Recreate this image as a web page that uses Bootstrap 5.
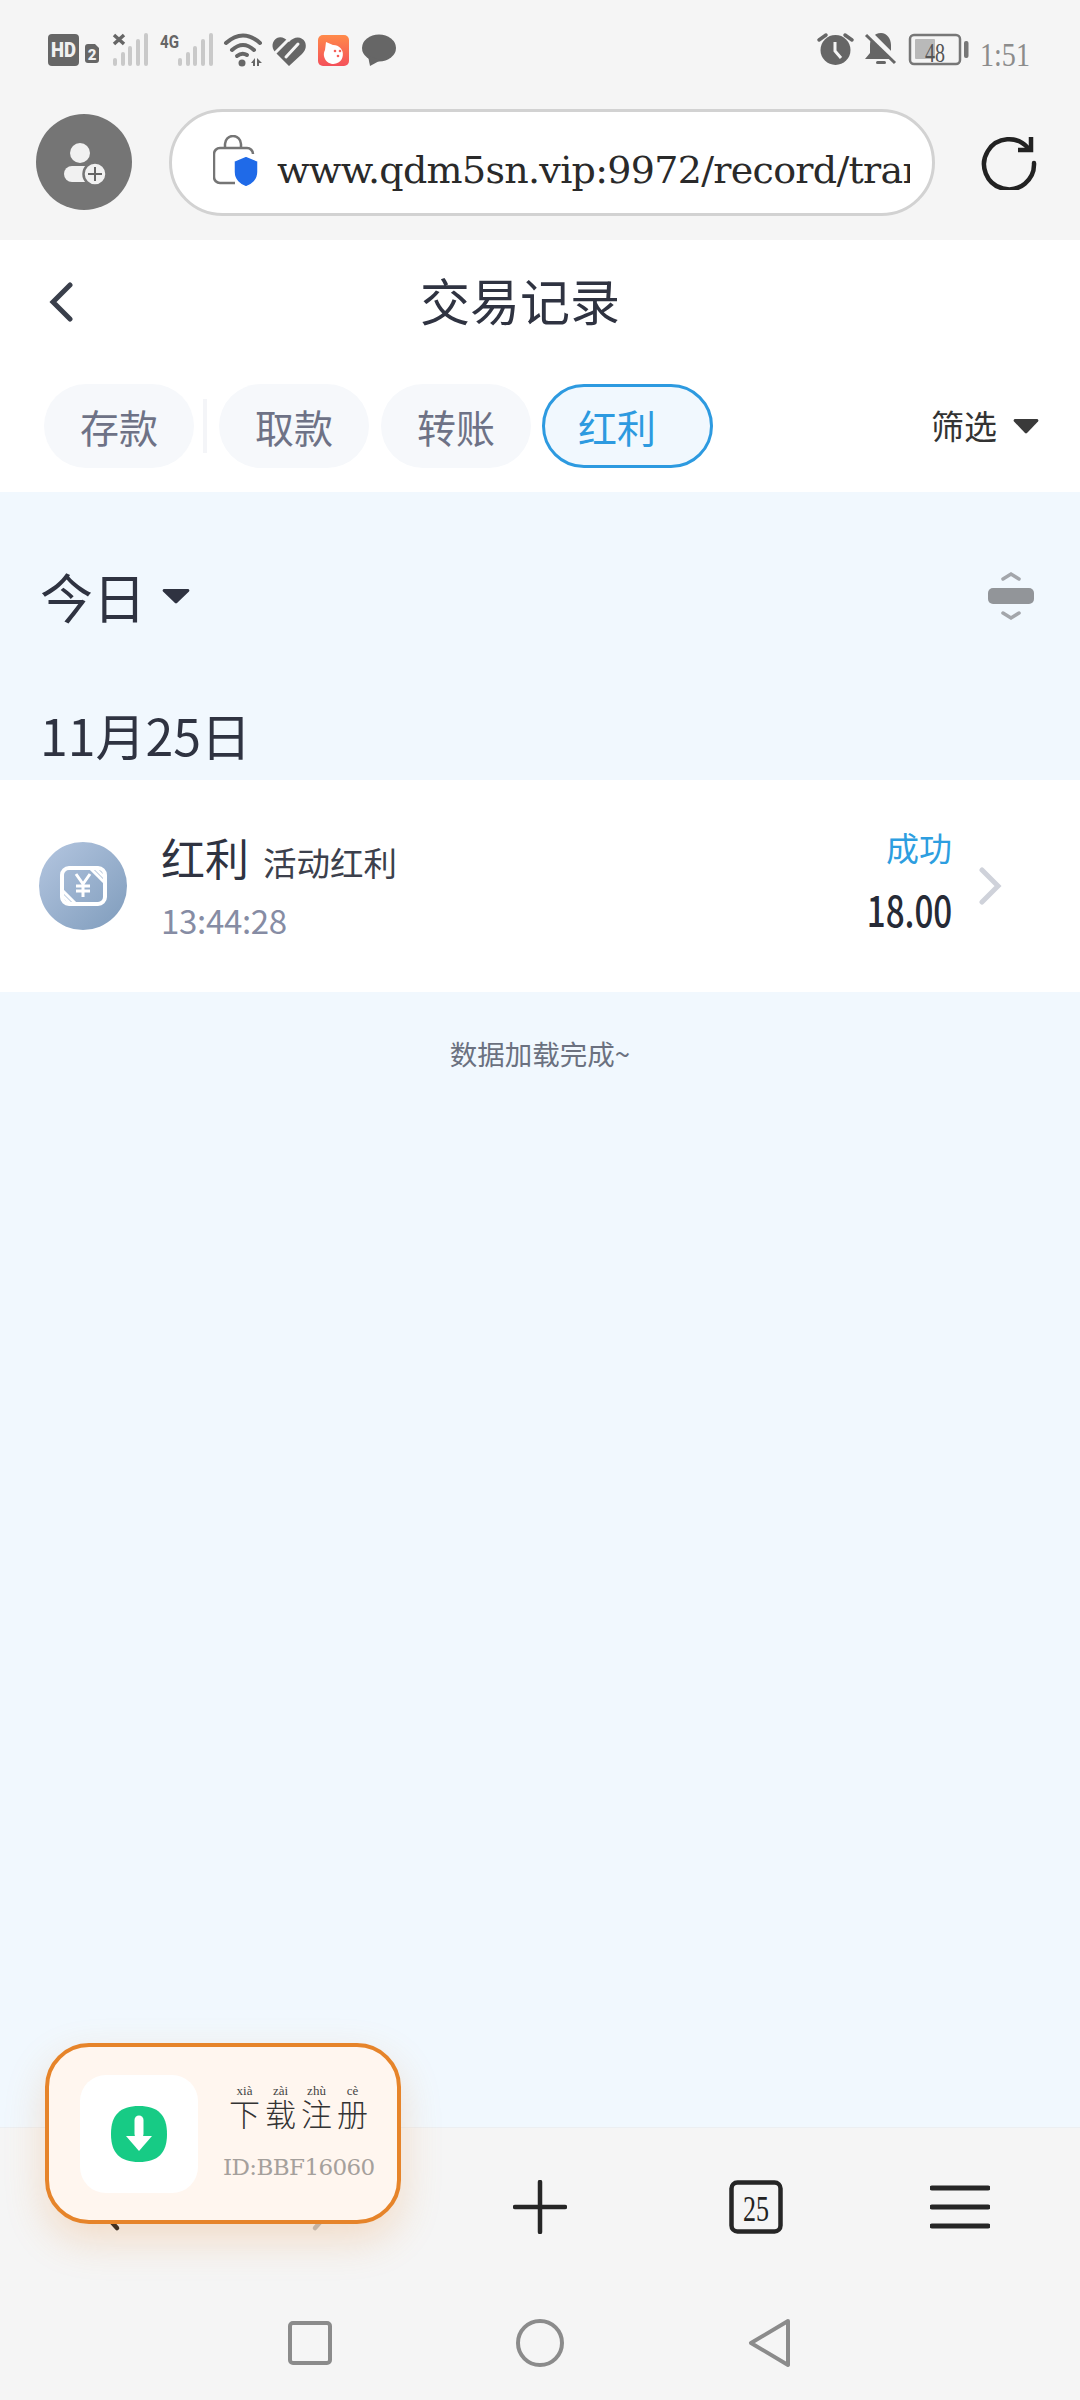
<!DOCTYPE html>
<html lang="zh-CN">
<head>
  <meta charset="UTF-8" />
  <meta name="viewport" content="width=device-width, initial-scale=1.0"/>
  <title>交易记录</title>
  <link href="https://cdn.jsdelivr.net/npm/bootstrap@5.3.0/dist/css/bootstrap.min.css" rel="stylesheet" />
  <style>
    body { width: 1080px; height: 2400px; overflow: hidden; background: #f1f8fe; font-family: "Noto Sans CJK SC", "Noto Sans", sans-serif; color: #2f3341; }
    svg { display: block; flex-shrink: 0; }
    .chrome-top { background: #f5f5f5; height: 240px; }
    .status-row { height: 92px; padding: 30px 40px 0 48px; }
    .browser-row { height: 140px; padding: 0 45px 0 36px; }
    .url-box { width: 766px; height: 107px; margin: 0 46px 0 37px; border: 3px solid #d2d2d2; background: #fff; padding: 0 22px 0 41px; }
    .url-text { font-family: "DejaVu Serif", "Liberation Serif", serif; font-size: 38px; color: #2a2a2a; white-space: nowrap; overflow: hidden; margin-left: 18px; padding-top: 16px; letter-spacing: -.7px; }
    .head-panel { background: #fff; height: 252px; padding-bottom: 24px; }
    .title-row { height: 124px; padding-bottom: 6px; }
    .back-cell { width: 100px; padding-left: 48px; padding-top: 6px; }
    .title-spacer { width: 140px; }
    .page-title { font-size: 50px; line-height: 1; color: #2f3341; }
    .tab-row { padding: 0 41px 0 44px; height: 84px; margin-top: 20px; }
    .tab-pill { width: 150px; height: 84px; padding: 0 36px; font-size: 39px; line-height: 78px; border: 0; background: #f6f8fb; color: #6e7286; text-align: left; white-space: nowrap; }
    .tab-on { width: 171px; border: 3px solid #2d9ae0; background: #f1f8fe; color: #2d9ae0; padding: 0 33px; margin-left: 11px; }
    .tab-gap { width: 4px; height: 54px; background: #f4f5f8; margin: 0 12px 0 9px; }
    .tab-next { margin-left: 12px; }
    .filter-text { font-size: 33px; color: #333; }
    .day-row { height: 208px; padding: 0 46px 0 40px; }
    .day-text { font-size: 53px; color: #2f3341; line-height: 1; }
    .date-row { height: 80px; padding-left: 40px; font-size: 50px; line-height: 68px; color: #2f3341; }
    .record-item { height: 212px; padding: 0 104px 0 39px; border-width: 0 0 2px; border-color: #eceef1; border-radius: 0; }
    .record-main { margin-left: 34px; }
    .rec-top { margin-top: -3px; }
    .rec-name { font-size: 44px; line-height: 60px; color: #2f3341; }
    .rec-sub { font-size: 33.500px; color: #3c404c; margin-left: 14px; margin-top: 10px; }
    .rec-time { font-size: 33px; line-height: 44px; color: #868ca4; letter-spacing: -.3px; margin-top: 11px; }
    .rec-state { font-size: 33px; line-height: 48px; color: #2d9ee0; margin-top: -13px; }
    .rec-amount { font-size: 42px; line-height: 56px; font-weight: 500; color: #262a36; transform: scaleX(.79); transform-origin: right center; margin-top: 10px; }
    .rec-arrow { margin-left: 26px; margin-right: -26px; }
    .done-text { font-size: 27.500px; color: #6b7180; text-align: center; margin-top: 41px; line-height: 40px; }
    .tool-row { height: 158px; background: #f5f5f5; border-top: 1px solid #eceff2; }
    .tool-cell { width: 216px; }
    .nav-row { height: 115px; background: #f5f5f5; }
    .nav-cell { width: 230px; }
    .float-card { position: absolute; left: 45px; top: 2043px; width: 356px; height: 181px; border: 4px solid #e6842a; border-radius: 44px; background: #fff6ef; box-shadow: 0 16px 40px rgba(230,132,42,.22); padding-left: 31px; }
    .app-tile { width: 118px; height: 118px; border-radius: 26px; background: #fff; }
    .card-side { margin-left: 28px; }
    .card-title { font-family: "Liberation Serif", "Noto Sans CJK SC", serif; font-size: 31px; line-height: 1; color: #333; white-space: nowrap; font-weight: 300; padding-left: 3px; }
    .card-title ruby { margin-right: 5px; }
    .card-title rt { font-family: "Liberation Serif", serif; font-size: 13px; color: #444; text-align: center; }
    .card-id { font-family: "DejaVu Serif", serif; font-size: 23px; color: #a5a09c; white-space: nowrap; margin-top: 21px; letter-spacing: -.6px; line-height: 30px; margin-left: -3px; }
  </style>
</head>
<body class="position-relative d-flex flex-column">

  <!-- Status and browser bar -->
  <div class="chrome-top">
    <div class="status-row d-flex justify-content-between">
      <svg width="350" height="40" viewBox="48 30 350 40">
        <rect x="48" y="34" width="31" height="32" rx="4" fill="#666"/>
        <text x="63.500" y="57" text-anchor="middle" font-family="Roboto" font-weight="900" font-size="20" fill="#f0f0f0" textLength="25" lengthAdjust="spacingAndGlyphs">HD</text>
        <path d="M85 47a3 3 0 0 1 3-3h7l4 4v12a3 3 0 0 1-3 3h-8a3 3 0 0 1-3-3z" fill="#666"/>
        <text x="92" y="60" text-anchor="middle" font-family="Roboto" font-weight="900" font-size="15" fill="#f0f0f0">2</text>
        <path d="M114 35l10 9M124 35l-10 9" stroke="#666" stroke-width="3.500"/>
        <g fill="#c9c9c9">
          <rect x="113" y="58" width="4" height="8" rx="2"/><rect x="121" y="52" width="4" height="14" rx="2"/><rect x="128" y="46" width="4" height="20" rx="2"/><rect x="136" y="39" width="4" height="27" rx="2"/><rect x="144" y="33" width="4" height="33" rx="2"/>
          <rect x="178" y="58" width="4" height="8" rx="2"/><rect x="186" y="52" width="4" height="14" rx="2"/><rect x="193" y="46" width="4" height="20" rx="2"/><rect x="201" y="39" width="4" height="27" rx="2"/><rect x="209" y="33" width="4" height="33" rx="2"/>
        </g>
        <text x="160" y="48" font-family="Roboto" font-weight="700" font-size="18" fill="#666" textLength="19" lengthAdjust="spacingAndGlyphs">4G</text>
        <g fill="none" stroke="#666" stroke-width="4" stroke-linecap="round">
          <path d="M226 43Q243 28 260 43"/><path d="M232 50Q243 40 254 50"/><path d="M237 56Q242 52 247 55"/>
        </g>
        <circle cx="242" cy="63" r="3.500" fill="#666"/>
        <path d="M251 63l4-5v8h-2v-3zM257 58l5 5h-3v3h-2z" fill="#666"/>
        <path d="M289 42C294 36 302 36 305 42 307 47 305 51 302 54L289 66 275 52C271 47 272 41 277 38 281 36 285 38 289 42z" fill="#666"/>
        <path d="M275 53L290 38M286 57L298 44" stroke="#f5f5f5" stroke-width="3" stroke-linecap="round"/>
        <defs><linearGradient id="appgrad" x1="0" y1="0" x2="0" y2="1"><stop offset="0" stop-color="#ff8a4a"/><stop offset="1" stop-color="#f4505a"/></linearGradient></defs>
        <rect x="318" y="35" width="31" height="31" rx="5" fill="url(#appgrad)"/>
        <path d="M326 42l7 3a9.500 9.500 0 1 1-8 5z" fill="#fff"/>
        <circle cx="335" cy="51" r="1.300" fill="#f4605a"/><circle cx="340" cy="51" r="1.300" fill="#f4605a"/><circle cx="338" cy="56" r="1.300" fill="#f4605a"/>
        <ellipse cx="379" cy="48" rx="17" ry="13.500" fill="#666"/>
        <path d="M368 56l2 10 11-6z" fill="#666"/>
      </svg>
      <svg width="224" height="40" viewBox="816 30 224 40">
        <circle cx="835.500" cy="50" r="15" fill="#666"/>
        <path d="M835 42v9l6 7" fill="none" stroke="#f5f5f5" stroke-width="3"/>
        <path d="M819 40l7-5M852 40l-7-5" stroke="#666" stroke-width="3.500" stroke-linecap="round"/>
        <path d="M881 33c-7 0-11 6-11 12v8l-5 6h31l-5-6v-8c0-6-4-12-10-12z" fill="#666"/>
        <rect x="876" y="61" width="10" height="3" rx="1.500" fill="#666"/>
        <path d="M869 33l27 27" stroke="#f5f5f5" stroke-width="6"/>
        <path d="M866 35l29 28" stroke="#666" stroke-width="3"/>
        <rect x="910" y="35" width="50" height="29" rx="4" fill="none" stroke="#777" stroke-width="2.500"/>
        <rect x="915" y="39" width="20" height="20" rx="1" fill="#b9b9b9"/>
        <rect x="964" y="41" width="4.500" height="17" rx="2" fill="#777"/>
        <text x="925" y="62" font-family="Liberation Serif" font-size="28" fill="#555" textLength="20" lengthAdjust="spacingAndGlyphs">48</text>
        <text x="980" y="66" font-family="Liberation Serif" font-size="34" fill="#8c8c8c" textLength="50" lengthAdjust="spacingAndGlyphs">1:51</text>
      </svg>
    </div>
    <div class="browser-row d-flex align-items-center">
      <svg width="96" height="96" viewBox="0 0 96 96">
        <circle cx="48" cy="48" r="48" fill="#757575"/>
        <circle cx="44" cy="39" r="10" fill="#f1f1f1"/>
        <rect x="28" y="52" width="32" height="16" rx="8" fill="#f1f1f1"/>
        <circle cx="59" cy="60" r="11.500" fill="#f1f1f1" stroke="#757575" stroke-width="2.500"/>
        <path d="M59 53v14M52 60h14" stroke="#666" stroke-width="2"/>
      </svg>
      <div class="url-box rounded-pill d-flex align-items-center">
        <svg width="46" height="54" viewBox="0 0 46 54">
          <path d="M12 14v-5a8 8 0 0 1 16 0v5" fill="none" stroke="#757575" stroke-width="2.500"/>
          <path d="M22 48H7a6 6 0 0 1-6-6V19a6 6 0 0 1 6-6h27a6 6 0 0 1 6 6" fill="none" stroke="#757575" stroke-width="2.500"/>
          <path d="M33 21l12 5v11c0 8-6 13-12 15-6-2-12-7-12-15V26z" fill="#1f6ae8" stroke="#fff" stroke-width="1.500"/>
        </svg>
        <div class="url-text">www.qdm5sn.vip:9972/record/tran</div>
      </div>
      <svg width="56" height="56" viewBox="0 0 56 56">
        <path d="M47 14A25 25 0 1 0 53 29" fill="none" stroke="#222" stroke-width="4.500" stroke-linecap="round"/>
        <path d="M50 3v13H37" fill="none" stroke="#222" stroke-width="4.500"/>
      </svg>
    </div>
  </div>

  <!-- Page header -->
  <div class="head-panel">
    <div class="title-row d-flex align-items-center">
      <div class="back-cell">
        <svg width="26" height="40" viewBox="0 0 26 40"><path d="M22 3L5 20l17 17" fill="none" stroke="#3a3f4b" stroke-width="5" stroke-linecap="round"/></svg>
      </div>
      <div class="flex-grow-1 text-center page-title">交易记录</div>
      <div class="title-spacer"></div>
    </div>
    <div class="tab-row d-flex align-items-center">
      <button class="btn rounded-pill tab-pill">存款</button>
      <span class="tab-gap"></span>
      <button class="btn rounded-pill tab-pill">取款</button>
      <button class="btn rounded-pill tab-pill tab-next">转账</button>
      <button class="btn rounded-pill tab-pill tab-on">红利</button>
      <div class="ms-auto d-flex align-items-center gap-3">
        <span class="filter-text">筛选</span>
        <svg width="26" height="16" viewBox="0 0 26 16"><path d="M2 1h22a1.500 1.500 0 0 1 1 2.500L14 15a1.500 1.500 0 0 1-2 0L1 3.500A1.500 1.500 0 0 1 2 1z" fill="#3a3a3a"/></svg>
      </div>
    </div>
  </div>

  <!-- Records -->
  <div class="flex-grow-1">
    <div class="day-row d-flex align-items-center">
      <span class="day-text">今日</span>
      <svg class="ms-3" width="28" height="16" viewBox="0 0 28 16"><path d="M2 1h24a1.500 1.500 0 0 1 1 2.500L15 15a1.500 1.500 0 0 1-2 0L1 3.500A1.500 1.500 0 0 1 2 1z" fill="#2f3341"/></svg>
      <svg class="ms-auto" width="46" height="50" viewBox="0 0 46 50">
        <path d="M15 8l8-5 8 5M15 42l8 5 8-5" fill="none" stroke="#a3a6ab" stroke-width="3.500" stroke-linecap="round"/>
        <rect x="0" y="17" width="46" height="16" rx="5" fill="#929599"/>
      </svg>
    </div>
    <div class="date-row">11月25日</div>
    <div class="list-group list-group-flush">
      <div class="list-group-item record-item d-flex align-items-center">
        <svg width="88" height="88" viewBox="0 0 88 88">
          <defs><linearGradient id="coin" x1="0" y1="0" x2="1" y2="1"><stop offset="0" stop-color="#b4c6e0"/><stop offset="1" stop-color="#7f9cbc"/></linearGradient></defs>
          <circle cx="44" cy="44" r="44" fill="url(#coin)"/>
          <rect x="23" y="26" width="43" height="36" rx="7" fill="none" stroke="#fff" stroke-width="4"/>
          <path d="M52 27l13 13M24 49l13 13M57 27l8 8M24 54l8 8" stroke="#fff" stroke-width="3"/>
          <path d="M37 32l7 10 7-10M44 42v13M37 44h14M37 49h14" fill="none" stroke="#fff" stroke-width="3"/>
        </svg>
        <div class="record-main">
          <div class="rec-top d-flex align-items-center"><span class="rec-name">红利</span><span class="rec-sub">活动红利</span></div>
          <div class="rec-time">13:44:28</div>
        </div>
        <div class="ms-auto text-end">
          <div class="rec-state">成功</div>
          <div class="rec-amount">18.00</div>
        </div>
        <svg class="rec-arrow" width="24" height="38" viewBox="0 0 24 38"><path d="M4 3l16 16L4 35" fill="none" stroke="#cfd2da" stroke-width="5" stroke-linecap="round"/></svg>
      </div>
    </div>
    <div class="done-text">数据加载完成~</div>
  </div>

  <!-- Browser toolbar -->
  <div class="tool-row d-flex align-items-center">
    <div class="tool-cell d-flex justify-content-center">
      <svg width="30" height="50" viewBox="0 0 30 50"><path d="M24 4L5 25l19 21" fill="none" stroke="#222" stroke-width="4.500" stroke-linecap="round"/></svg>
    </div>
    <div class="tool-cell d-flex justify-content-center">
      <svg width="30" height="50" viewBox="0 0 30 50"><path d="M6 4l19 21L6 46" fill="none" stroke="#bdbdbd" stroke-width="4.500" stroke-linecap="round"/></svg>
    </div>
    <div class="tool-cell d-flex justify-content-center">
      <svg width="54" height="54" viewBox="0 0 54 54"><path d="M27 2v50M2 27h50" stroke="#262626" stroke-width="4.500" stroke-linecap="round"/></svg>
    </div>
    <div class="tool-cell d-flex justify-content-center">
      <svg width="54" height="54" viewBox="0 0 54 54">
        <rect x="2.500" y="2.500" width="49" height="49" rx="6" fill="none" stroke="#262626" stroke-width="4.500"/>
        <text x="14" y="41" font-family="Liberation Serif" font-size="36" fill="#222" textLength="26" lengthAdjust="spacingAndGlyphs">25</text>
      </svg>
    </div>
    <div class="tool-cell d-flex justify-content-center">
      <svg class="me-4" width="60" height="48" viewBox="0 0 60 48"><path d="M2 5h56M2 24h56M2 43h56" stroke="#262626" stroke-width="5" stroke-linecap="round"/></svg>
    </div>
  </div>

  <!-- Android nav -->
  <div class="nav-row d-flex align-items-center justify-content-center">
    <div class="nav-cell d-flex justify-content-center">
      <svg width="44" height="44" viewBox="0 0 44 44"><rect x="2" y="2" width="40" height="40" rx="3" fill="none" stroke="#8b8b8b" stroke-width="4"/></svg>
    </div>
    <div class="nav-cell d-flex justify-content-center">
      <svg width="48" height="48" viewBox="0 0 48 48"><circle cx="24" cy="24" r="22" fill="none" stroke="#8b8b8b" stroke-width="4"/></svg>
    </div>
    <div class="nav-cell d-flex justify-content-center">
      <svg width="44" height="50" viewBox="0 0 44 50"><path d="M40 3L3 25l37 22z" fill="none" stroke="#8b8b8b" stroke-width="4" stroke-linejoin="round"/></svg>
    </div>
  </div>

  <!-- Download float -->
  <div class="float-card d-flex align-items-center">
    <div class="app-tile d-flex align-items-center justify-content-center flex-shrink-0">
      <svg width="56" height="56" viewBox="0 0 56 56">
        <path d="M28 0C47 0 56 9 56 28S47 56 28 56 0 47 0 28 9 0 28 0z" fill="#17cb85"/>
        <path d="M28 14v14" stroke="#fff" stroke-width="9" stroke-linecap="round"/>
        <path d="M15 30h26L28 45z" fill="#fff"/>
      </svg>
    </div>
    <div class="card-side">
      <div class="card-title"><ruby>下<rt>xià</rt></ruby><ruby>载<rt>zài</rt></ruby><ruby>注<rt>zhù</rt></ruby><ruby>册<rt>cè</rt></ruby></div>
      <div class="card-id">ID:BBF16060</div>
    </div>
  </div>

</body>
</html>
